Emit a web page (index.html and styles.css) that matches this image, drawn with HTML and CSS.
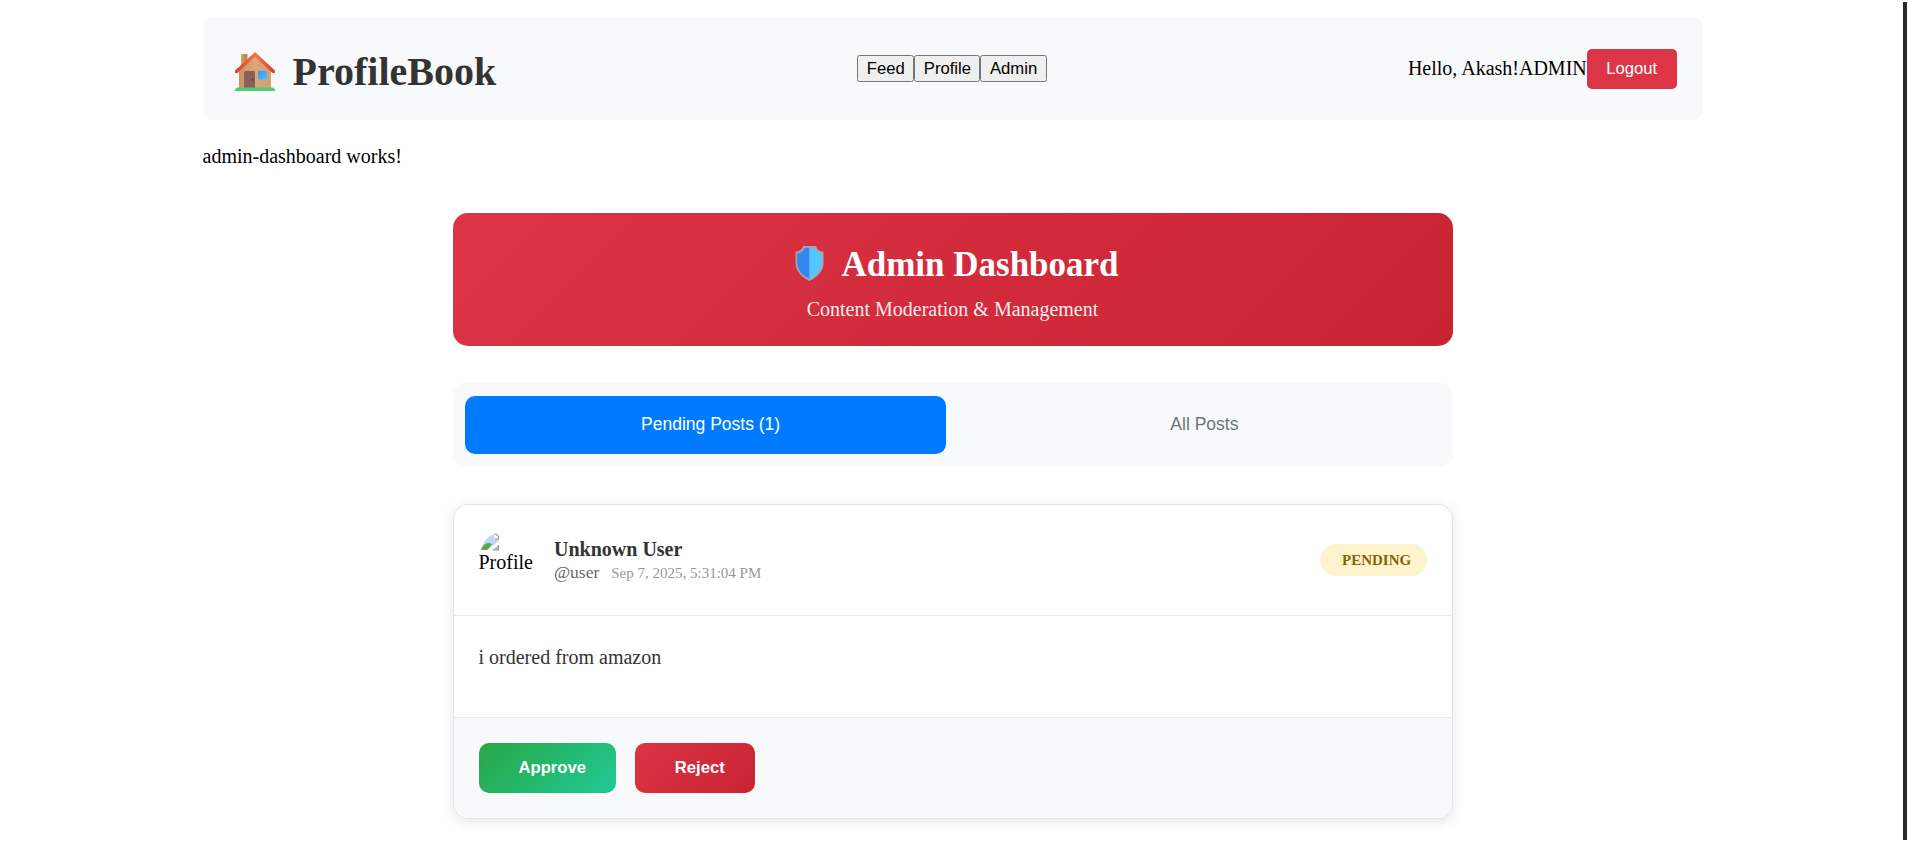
FILE: index.html
```html
<!DOCTYPE html>
<html lang="en">
<head>
<meta charset="utf-8">
<title>ProfileBook</title>
<link rel="stylesheet" href="styles.css">
</head>
<body>
<div class="container">
  <header class="header">
    <h1 class="brand">
      <svg class="house" viewBox="0 0 40 40">
        <defs>
          <linearGradient id="wall" x1="0" x2="1"><stop offset="0" stop-color="#c9925f"/><stop offset=".5" stop-color="#dca676"/><stop offset="1" stop-color="#d79f70"/></linearGradient>
          <linearGradient id="roof" x1="0" x2="0" y1="0" y2="1"><stop offset="0" stop-color="#ff7a45"/><stop offset="1" stop-color="#dc3a3c"/></linearGradient>
          <linearGradient id="chimney" x1="0" x2="1"><stop offset="0" stop-color="#d9a66c"/><stop offset="1" stop-color="#a97850"/></linearGradient>
          <linearGradient id="pane" x1="0" x2="1" y1="0" y2="1"><stop offset="0" stop-color="#2a9df0"/><stop offset="1" stop-color="#4cc0fb"/></linearGradient>
        </defs>
        <rect x="6" y="2" width="6.4" height="14" rx=".8" fill="url(#chimney)"/>
        <path d="M4 18 20 3 36 18V37H4Z" fill="url(#wall)"/>
        <path d="M20 0 40 18.5V20.5Q39 21.8 37.3 20.8L20 4.8 2.7 20.8Q1 21.8 0 20.5V18.5Z" fill="url(#roof)"/>
        <path d="M9 36V20.5Q9 19 10.500 19H18.500Q20 19 20 20.500V36Z" fill="#8b5f57"/>
        <circle cx="17.500" cy="27.500" r=".9" fill="#5e3d3a"/>
        <rect x="23" y="19" width="9" height="8.500" rx="1" fill="url(#pane)"/>
        <path d="M0 39V37.500Q1 35.600 3 35.600H37Q39 35.600 40 37.500V39Z" fill="#48cf78"/>
      </svg>
      <span>ProfileBook</span>
    </h1>
    <nav class="nav"><button>Feed</button><button>Profile</button><button>Admin</button></nav>
    <div class="user"><span>Hello, Akash!</span><span>ADMIN</span><button class="logout">Logout</button></div>
  </header>
  <p class="notice">admin-dashboard works!</p>
  <main class="dashboard">
    <section class="banner">
      <h1 class="banner-title">
        <svg class="shield" viewBox="0 0 29 35">
          <path d="M8 0H21C22 3 23.500 5 28.500 6V17C28.500 25 22 31.500 14.500 35 7 31.500 .5 25 .5 17V6C5.500 5 7 3 8 0Z" fill="#a9a3b4"/>
          <path d="M14.500 1.800H9.500C8.500 5 6.500 6.800 2.200 7.500V17C2.200 24 8 30 14.500 33.200Z" fill="#3487ee"/>
          <path d="M14.500 1.800H19.500C20.500 5 22.500 6.800 26.800 7.500V17C26.800 24 21 30 14.500 33.200Z" fill="#56c6ff"/>
        </svg>
        <span>Admin Dashboard</span>
      </h1>
      <p class="banner-sub">Content Moderation &amp; Management</p>
    </section>
    <div class="tabs"><button class="tab active">Pending Posts (1)</button><button class="tab">All Posts</button></div>
    <article class="card">
      <div class="card-head">
        <div class="avatar">
          <svg class="broken" viewBox="0 0 20 18">
            <path d="M1 17C3 9 8 3 14 1V5.500H18.500V8L9 17Z" fill="#c3d5f5"/>
            <path d="M1 17C3 11 8 8 12 11.500L7 17Z" fill="#5aac3c"/>
            <path d="M12.500 17 18.500 12V17Z" fill="#b5c4b8"/>
            <path d="M14 1H16L18.500 3.500V6H15M12.500 17H18.500V12" fill="none" stroke="#999" stroke-width="1.200"/>
            <path d="M8.500 17.500 19 9" stroke="#fff" stroke-width="2"/>
          </svg>
          <span>Profile</span>
        </div>
        <div class="author">
          <div class="name">Unknown User</div>
          <div class="meta"><span class="handle">@user</span><span class="date">Sep 7, 2025, 5:31:04 PM</span></div>
        </div>
        <span class="badge">PENDING</span>
      </div>
      <div class="card-body">i ordered from amazon</div>
      <div class="card-actions"><button class="action approve">Approve</button><button class="action reject">Reject</button></div>
    </article>
  </main>
</div>
<div class="edge"></div>
</body>
</html>
```
FILE: styles.css
```css
* { box-sizing: border-box; }
body {
  margin: 0;
  height: 842px;
  overflow: hidden;
  display: flex;
  background: #fff;
  color: #000;
  font: 20px/23px "Liberation Serif", "Times New Roman", serif;
}
h1, p { margin: 0; }
button { font-family: "Liberation Sans", Arial, sans-serif; font-size: 16.667px; }
.container { width: 1500px; margin-left: 202.5px; padding-top: 17px; }
.header {
  display: grid;
  grid-template-columns: 1fr auto 1fr;
  align-items: center;
  height: 103px;
  padding: 0 25px;
  border-radius: 10px;
  background: #f8f9fa;
}
.brand { display: flex; align-items: center; gap: 18px; padding: 6px 0 0 7px; color: #333; font-size: 40px; line-height: 46px; }
.house { width: 40px; height: 40px; }
.nav { display: flex; margin-left: -1px; }
.nav button { height: 27px; padding: 1px 7.5px; color: #000; }
.user { display: flex; justify-content: flex-end; align-items: center; padding-right: .75px; }
.logout { width: 90px; height: 40px; padding: 0; border: 0; border-radius: 5px; background: #dc3545; color: #fff; }
.notice { margin-top: 25px; }
.dashboard { width: 1000px; margin: 45px auto 0; }
.banner {
  display: flex;
  flex-direction: column;
  align-items: center;
  height: 133px;
  padding-top: 32px;
  border-radius: 15px;
  background: linear-gradient(135deg, #dc3545, #c82333);
  color: #fff;
}
.banner-title { display: flex; align-items: center; gap: 17px; padding-left: 9px; font-size: 35px; line-height: 40px; }
.shield { width: 29px; height: 35px; margin-bottom: 4px; }
.banner-sub { margin-top: 13px; opacity: .9; }
.tabs { display: flex; gap: 12.5px; height: 84px; margin-top: 37px; padding: 13px 12.5px; border-radius: 12.5px; background: #f8f9fa; }
.tab { flex: 1; padding: 0 0 2px 10px; border: 0; border-radius: 10px; background: transparent; color: #6c757d; font-size: 17.5px; }
.tab.active { background: #007bff; color: #fff; }
.card { margin-top: 37px; height: 315px; border: 1px solid #e1e5e9; border-radius: 15px; overflow: hidden; background: #fff; box-shadow: 0 2.5px 12.5px rgba(0, 0, 0, .1); }
.card-head { display: flex; align-items: center; height: 111px; padding: 0 25px; border-bottom: 1px solid #e9ecef; }
.avatar { display: flex; flex-direction: column; width: 62px; height: 56px; padding-top: 1px; margin-right: 13.5px; }
.broken { width: 20px; height: 18px; margin-left: 1px; }
.author { flex: 1; padding-top: 2px; }
.name { color: #333; font-weight: bold; }
.meta { display: flex; align-items: baseline; gap: 12px; }
.handle { color: #666; font-size: 17.5px; }
.date { color: #999; font-size: 15px; }
.badge { width: 107px; height: 32px; padding-left: 22.5px; border-radius: 16px; background: #fff3cd; color: #856404; font-size: 15px; font-weight: bold; line-height: 32px; }
.card-body { height: 101px; padding: 30px 25px; color: #333; }
.card-actions { display: flex; gap: 19px; height: 102px; padding: 25px; border-top: 1px solid #e9ecef; background: #f8f9fa; }
.action { height: 50px; padding: 0 0 0 10.5px; border: 0; border-radius: 10px; color: #fff; font-weight: bold; }
.approve { width: 137px; background: linear-gradient(135deg, #28a745, #20c997); }
.reject { width: 120px; background: linear-gradient(135deg, #dc3545, #c82333); }
.edge { width: 4px; height: 838px; margin: 2px 2px 0 auto; background: #2b2b2b; }
```
